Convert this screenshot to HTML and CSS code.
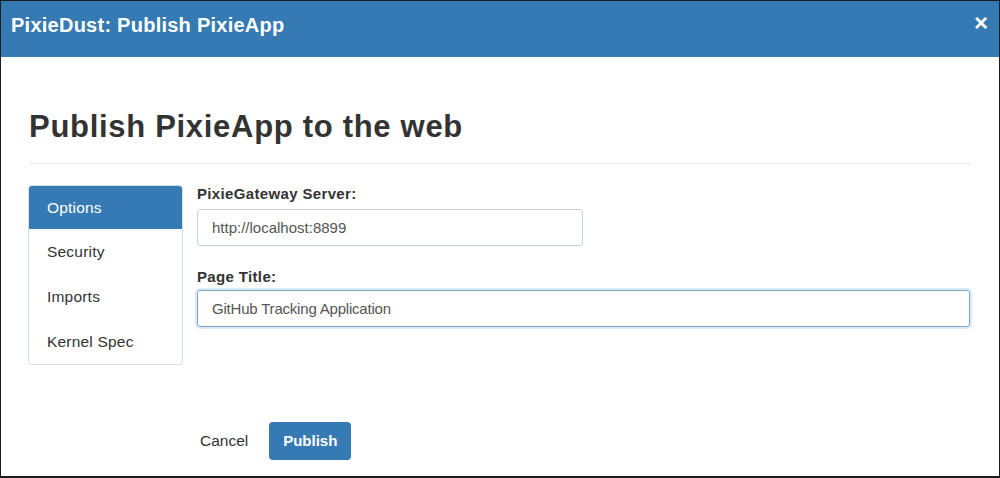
FILE: index.html
```html
<!DOCTYPE html>
<html>
<head>
<meta charset="utf-8">
<link rel="stylesheet" href="styles.css">
</head>
<body>
<div class="frame">
  <div class="modal-header">
    <div class="modal-title">PixieDust: Publish PixieApp</div>
    <div class="close">×</div>
  </div>
  <div class="modal-body">
    <h1 class="page-title">Publish PixieApp to the web</h1>
    <div class="content">
      <ul class="nav">
        <li class="nav-item active">Options</li>
        <li class="nav-item">Security</li>
        <li class="nav-item">Imports</li>
        <li class="nav-item">Kernel Spec</li>
      </ul>
      <div class="form">
        <label class="label">PixieGateway Server:</label>
        <div class="input input-short">http://localhost:8899</div>
        <label class="label label-second">Page Title:</label>
        <div class="input input-focus">GitHub Tracking Application</div>
      </div>
    </div>
    <div class="footer">
      <span class="cancel">Cancel</span>
      <span class="btn-primary">Publish</span>
    </div>
  </div>
</div>
</body>
</html>
```
FILE: styles.css
```css
* { box-sizing: border-box; }
html, body { margin: 0; padding: 0; background: #fff; }
body { font-family: "Liberation Sans", Arial, sans-serif; color: #333; }

.frame {
  width: 1000px;
  height: 478px;
  border: 1px solid #1c1c1c;
  border-bottom-width: 2px;
  overflow: hidden;
  background: #fff;
}

.modal-header {
  height: 56px;
  background: #367ab3;
  display: flex;
  justify-content: space-between;
  align-items: flex-start;
  padding: 13px 11px 0 10px;
}
.modal-title {
  color: #fff;
  font-size: 20px;
  line-height: 22px;
  font-weight: bold;
  letter-spacing: 0.25px;
}
.close {
  color: #fff;
  font-size: 24px;
  line-height: 22px;
  font-weight: bold;
  margin-top: -2px;
}

.modal-body {
  padding: 0 28px 0 27px;
}
.page-title {
  margin: 53px 0 0 1px;
  font-size: 31px;
  line-height: 33px;
  font-weight: bold;
  letter-spacing: 0.7px;
  color: #333;
  padding-bottom: 20px;
  border-bottom: 1px solid #e3ecf3;
}

.content {
  display: flex;
  gap: 14px;
  margin-top: 21px;
}
.nav {
  list-style: none;
  margin: 0;
  padding: 0;
  width: 155px;
  border: 1px solid #d7dfe6;
  border-radius: 4px;
  overflow: hidden;
  flex: none;
}
.nav-item {
  height: 45px;
  line-height: 45px;
  padding-left: 18px;
  font-size: 15.5px;
  letter-spacing: 0.2px;
  color: #333;
}
.nav-item.active {
  height: 43px;
  line-height: 43px;
  background: #367ab3;
  color: #fff;
}

.form {
  flex: 1;
  display: flex;
  flex-direction: column;
  align-items: flex-start;
}
.label {
  font-size: 15px;
  font-weight: bold;
  line-height: 18px;
  letter-spacing: 0.35px;
  color: #333;
  margin-top: 0;
  margin-bottom: 6px;
}
.label-second { margin-top: 22px; margin-bottom: 4px; }
.input {
  height: 37px;
  border: 1px solid #c8d0d8;
  border-radius: 3px;
  font-size: 15px;
  line-height: 35px;
  padding-left: 14px;
  color: #555;
}
.input-short { width: 386px; }
.input-focus {
  width: 773px;
  border-color: #7fa6c8;
  box-shadow: 0 0 0 2px rgba(102, 175, 233, 0.25);
  letter-spacing: -0.2px;
}

.footer {
  display: flex;
  align-items: center;
  gap: 21px;
  margin-top: 57px;
  padding-left: 172px;
}
.cancel {
  font-size: 15.5px;
  color: #333;
  margin-top: -1px;
}
.btn-primary {
  display: inline-block;
  width: 82px;
  height: 38px;
  line-height: 38px;
  text-align: center;
  background: #367ab3;
  color: #fff;
  font-weight: bold;
  font-size: 15px;
  border-radius: 4px;
}
```
